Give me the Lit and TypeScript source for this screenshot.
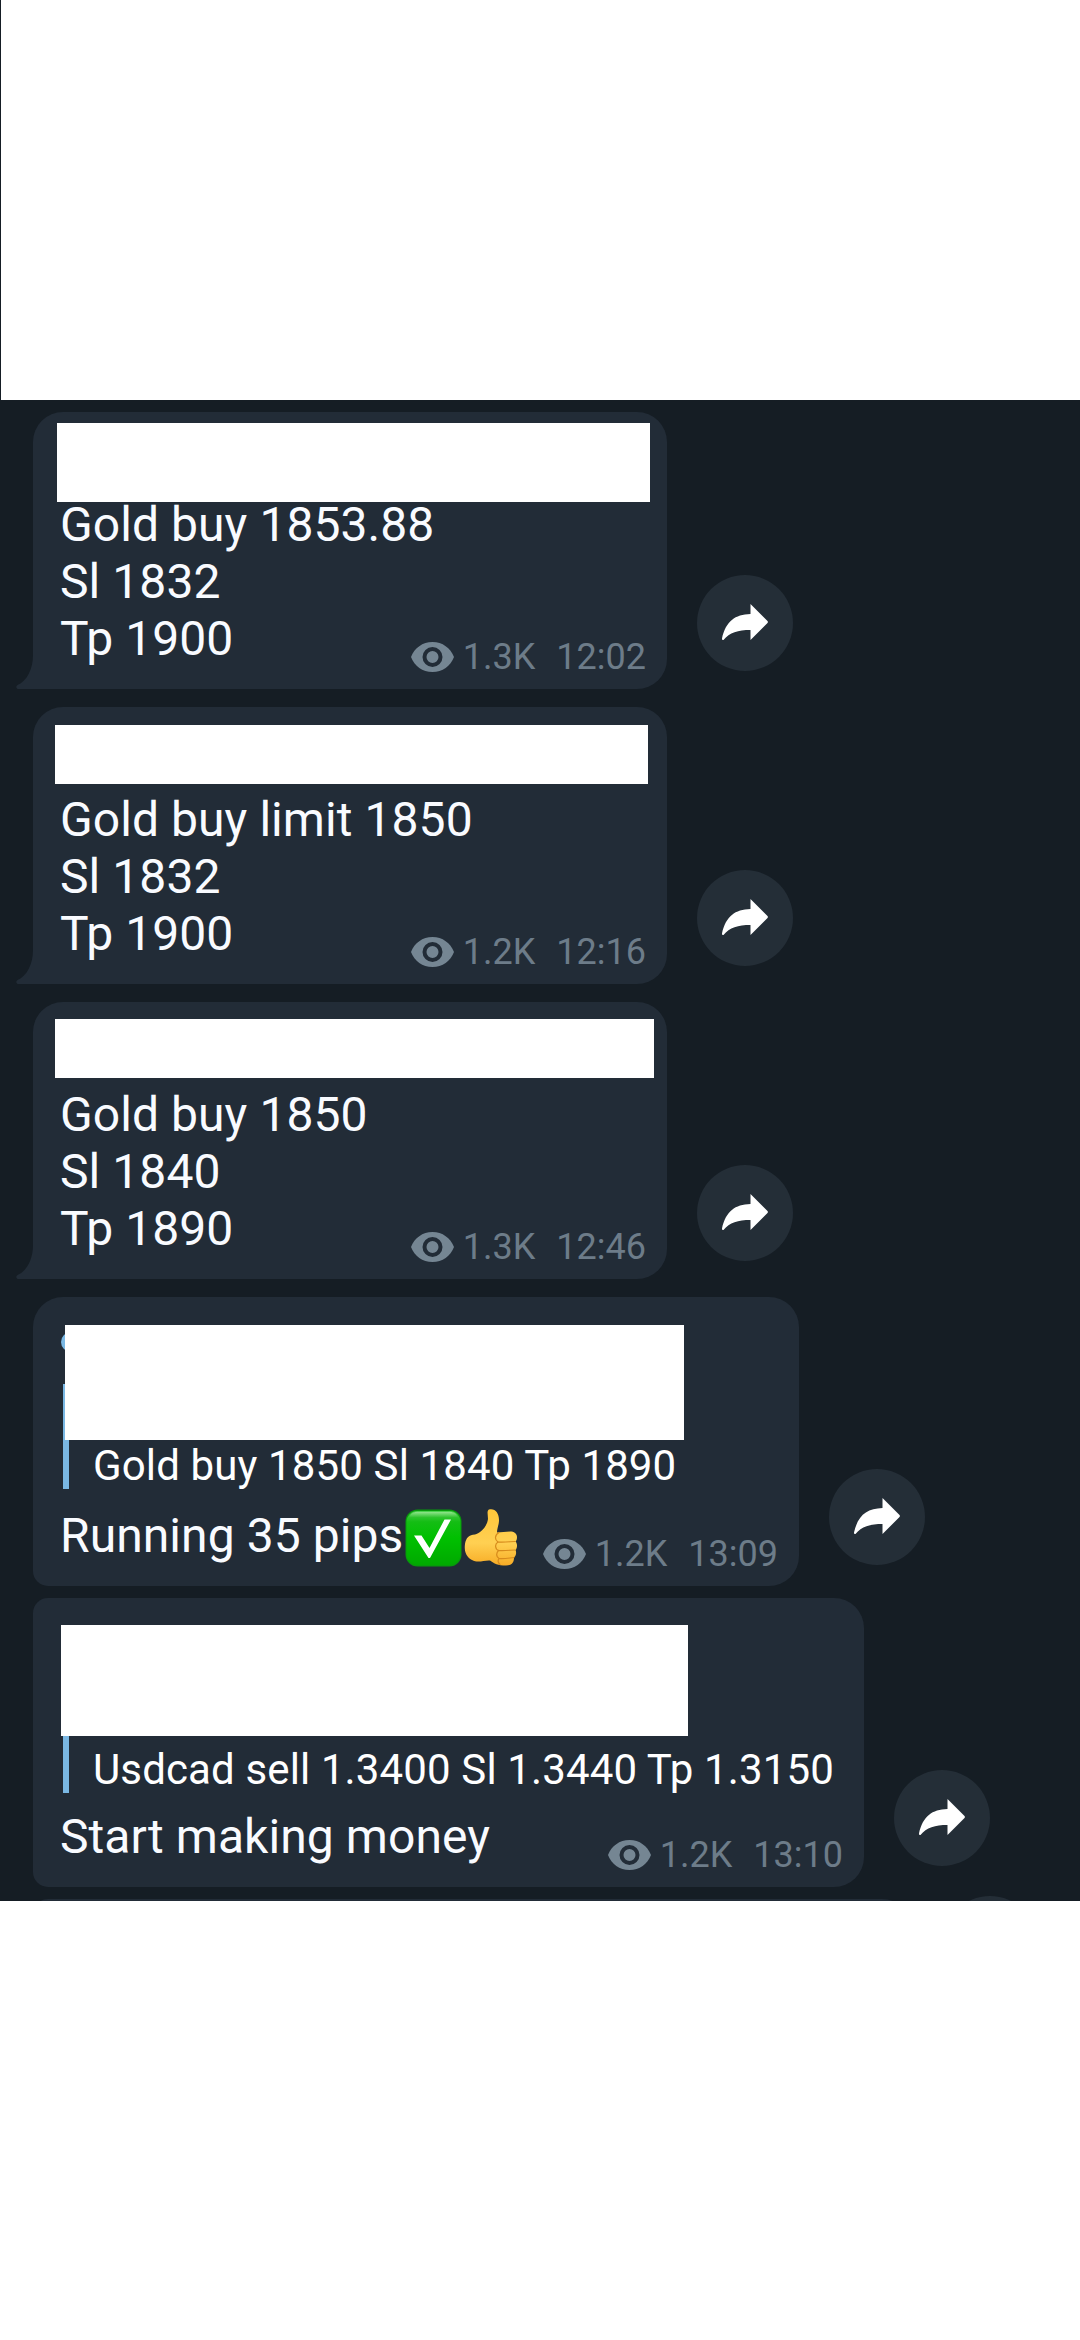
import { LitElement, html, css, svg, nothing } from "lit";
import { customElement, property } from "lit/decorators.js";
import { styleMap } from "lit/directives/style-map.js";

interface Message {
  width: number;
  lines: string[];
  emoji?: boolean;
  quote?: string;
  hintedName?: boolean;
  views: string;
  time: string;
  kind: "tailed" | "first" | "middle";
  cover: { x: number; y: number; w: number; h: number };
}

const messages: Message[] = [
  { width: 634, lines: ["Gold buy 1853.88", "Sl 1832", "Tp 1900"], views: "1.3K", time: "12:02", kind: "tailed", cover: { x: 24, y: 11, w: 593, h: 79 } },
  { width: 634, lines: ["Gold buy limit 1850", "Sl 1832", "Tp 1900"], views: "1.2K", time: "12:16", kind: "tailed", cover: { x: 22, y: 18, w: 593, h: 59 } },
  { width: 634, lines: ["Gold buy 1850", "Sl 1840", "Tp 1890"], views: "1.3K", time: "12:46", kind: "tailed", cover: { x: 22, y: 17, w: 599, h: 59 } },
  { width: 766, lines: ["Running 35 pips"], emoji: true, quote: "Gold buy 1850 Sl 1840 Tp 1890", hintedName: true, views: "1.2K", time: "13:09", kind: "first", cover: { x: 32, y: 28, w: 619, h: 115 } },
  { width: 831, lines: ["Start making money"], quote: "Usdcad sell 1.3400 Sl 1.3440 Tp 1.3150", views: "1.2K", time: "13:10", kind: "middle", cover: { x: 28, y: 27, w: 627, h: 111 } },
];

const eye = svg`<svg class="eye" viewBox="0 0 43 30"><path fill-rule="evenodd" d="M21.5 0C11.5 0 3.5 6 0 15c3.5 9 11.5 15 21.5 15S39.500 24 43 15C39.500 6 31.500 0 21.500 0Zm0 5a10 10 0 1 1 0 20a10 10 0 1 1 0-20Zm0 4a6 6 0 1 0 0 12a6 6 0 1 0 0-12Z"/></svg>`;

const check = svg`<svg class="emoji" viewBox="0 0 57 58">
  <defs><linearGradient id="g" x1="0" y1="0" x2="0" y2="1"><stop offset="0" stop-color="#4fd34f"/><stop offset=".2" stop-color="#14bd14"/><stop offset=".5" stop-color="#00c000"/><stop offset="1" stop-color="#00a900"/></linearGradient>
  <linearGradient id="s" x1="0" y1="0" x2="0" y2="1"><stop offset="0" stop-color="#8fe48b"/><stop offset="1" stop-color="#25bf25"/></linearGradient></defs>
  <rect x=".5" y=".5" width="56" height="57" rx="12" fill="#079a0b"/>
  <rect x="1.500" y="2" width="54" height="54" rx="11" fill="url(#g)"/>
  <path d="M12 3h33c4 0 7 2 8 6H4c1-4 4-6 8-6Z" fill="url(#s)"/>
  <path d="M9 26.500h7.500L24.500 39 39.500 10.500H46L25 49h-1.500Z" fill="#fff"/></svg>`;

const thumb = svg`<svg class="emoji" viewBox="0 0 57 58">
  <defs><linearGradient id="t" x1="0" y1="0" x2="0" y2="1"><stop offset="0" stop-color="#ffc63a"/><stop offset=".6" stop-color="#ffd052"/><stop offset="1" stop-color="#f7ac26"/></linearGradient></defs>
  <path fill="url(#t)" d="M25 .5C31 -1 35 4 35 11C35 16 33 19 33 23.500L46 22.500C50 22.500 53 24.500 53 28C53 30 52.500 31.500 51.500 32.500C53.500 34.500 53.500 39 51.500 41C52.500 43 52.500 46.500 50 48.500C50 53.500 48 56.500 42 56.500C34 56.500 30 54.500 26 51.500C20 51 14 54.500 8 51C2 48 0 42 1 35C2 29 5 25.500 11 25.500C16 24.500 23 18 24 10C24 6 22.500 2 25 .5Z"/>
  <path fill="none" stroke="#d78b1c" stroke-width="1.200" stroke-linecap="round" d="M35 23.500C30.500 26 30.500 31 34 33C41 33.500 47 32.500 51 32.500M34 33C30.500 35 31 40 34.500 41.500C41 42 47 41 51 41M34.500 41.500C32 44 32 48 35 49.500C40 50 46 49 50 48.500M35 49.500C33.500 51.500 34 54 36 55.500"/></svg>`;

@customElement("share-button")
class ShareButton extends LitElement {
  static styles = css`
    :host { display: grid; place-items: center; width: 96px; height: 96px; border-radius: 50%; background: #242e37; flex: none; }
    svg { width: 46px; height: 36px; fill: #fff; display: block; margin-top: -3px; }
  `;
  render() {
    return html`<svg viewBox="0 0 46 36"><path d="M28.500 0 L45.500 17 Q46.300 18 45.500 19 L28.500 36 V26 C16 26 7.500 28.500 1.500 36 Q0 36.500 0 34.500 C4 17 13 10.500 28.500 10 Z"/></svg>`;
  }
}

@customElement("chat-message")
class ChatMessage extends LitElement {
  @property({ attribute: false }) message!: Message;
  static styles = css`
    :host { display: flex; align-items: flex-end; gap: 30px; padding-left: 33px; }
    .bubble { position: relative; box-sizing: border-box; flex: none; display: flex; flex-direction: column; padding: 84px 21px 22px 27px; background: #222c37; color: #f9fbff; }
    .tailed { border-radius: 30px 30px 30px 0; }
    .first, .middle { padding-top: 87px; }
    .first { border-radius: 30px 30px 30px 15px; }
    .middle { border-radius: 15px 30px 30px 15px; padding-top: 90px; }
    .tail { position: absolute; left: -17px; bottom: 0; width: 18px; height: 34px; fill: #222c37; }
    .cover { position: absolute; background: #fff; }
    .name { position: absolute; left: 28px; top: 35px; width: 20px; height: 20px; border-radius: 50%; background: #7ab8e4; }
    .quote { display: flex; align-items: flex-end; box-sizing: border-box; height: 105px; margin: 0 0 18px 3px; padding-left: 24px; border-left: 6px solid #7ab8e4; color: #fff; font-size: 42px; line-height: 47px; letter-spacing: 0.13px; white-space: pre; }
    .middle .quote { margin-bottom: 15px; }
    .body { display: flex; align-items: flex-end; justify-content: space-between; }
    .text { flex: 1 1 0; min-width: 0; display: flex; flex-direction: column; font-size: 48px; line-height: 57px; letter-spacing: 0.07px; }
    .last { display: flex; height: 57px; white-space: pre; }
    .emoji { flex: none; width: 57px; height: 58px; margin: 2px 0 -3px 2px; }
    .meta { flex: none; display: flex; align-items: center; margin-bottom: -11px; font-size: 36px; line-height: 42px; color: #6d7c89; white-space: pre; }
    .eye { width: 43px; height: 30px; fill: #758693; margin-right: 9px; }
    .time { margin-left: 21px; }
    share-button { margin-bottom: 18px; }
    .raised { margin-bottom: 21px; }
  `;
  render() {
    const m = this.message;
    const c = m.cover;
    return html`
      <div class="bubble ${m.kind}" style=${styleMap({ width: `${m.width}px` })}>
        ${m.kind === "tailed" ? html`<svg class="tail" viewBox="0 0 18 34"><path d="M17 0C17 14 11 26 1.500 30Q-1 32 1.500 34H18V0Z"/></svg>` : nothing}
        ${m.quote ? html`<div class="quote">${m.quote}</div>` : nothing}
        ${m.hintedName ? html`<div class="name"></div>` : nothing}
        <div class="body">
          <div class="text">
            ${m.lines.map((l) => html`<div class="last">${l}${m.emoji ? html`${check}${thumb}` : nothing}</div>`)}
          </div>
          <div class="meta">${eye}<span>${m.views}</span><span class="time">${m.time}</span></div>
        </div>
        <div class="cover" style=${styleMap({ left: `${c.x}px`, top: `${c.y}px`, width: `${c.w}px`, height: `${c.h}px` })}></div>
      </div>
      <share-button class=${m.kind === "tailed" ? "" : "raised"}></share-button>
    `;
  }
}

@customElement("app-root")
class AppRoot extends LitElement {
  static styles = css`
    :host { display: flex; flex-direction: column; width: 1080px; height: 2340px; background: #fff; font-family: Roboto, "Liberation Sans", sans-serif; }
    .top { box-sizing: border-box; height: 400px; border-left: 1px solid #151d24; }
    .chat { box-sizing: border-box; height: 1501px; padding-top: 12px; overflow: hidden; background: #151d24; display: flex; flex-direction: column; }
    chat-message { flex: none; margin-bottom: 18px; }
    .tight { margin-bottom: 12px; }
    .next { display: flex; flex: none; gap: 30px; padding-left: 33px; }
    .stub { width: 879px; height: 60px; border-radius: 15px 30px 0 0; background: #222c37; }
    .next share-button { margin-top: -3px; }
  `;
  render() {
    return html`
      <div class="top"></div>
      <main class="chat">
        ${messages.map((m) => html`<chat-message class=${m.quote ? "tight" : ""} .message=${m}></chat-message>`)}
        <div class="next"><div class="stub"></div><share-button></share-button></div>
      </main>
    `;
  }
}
